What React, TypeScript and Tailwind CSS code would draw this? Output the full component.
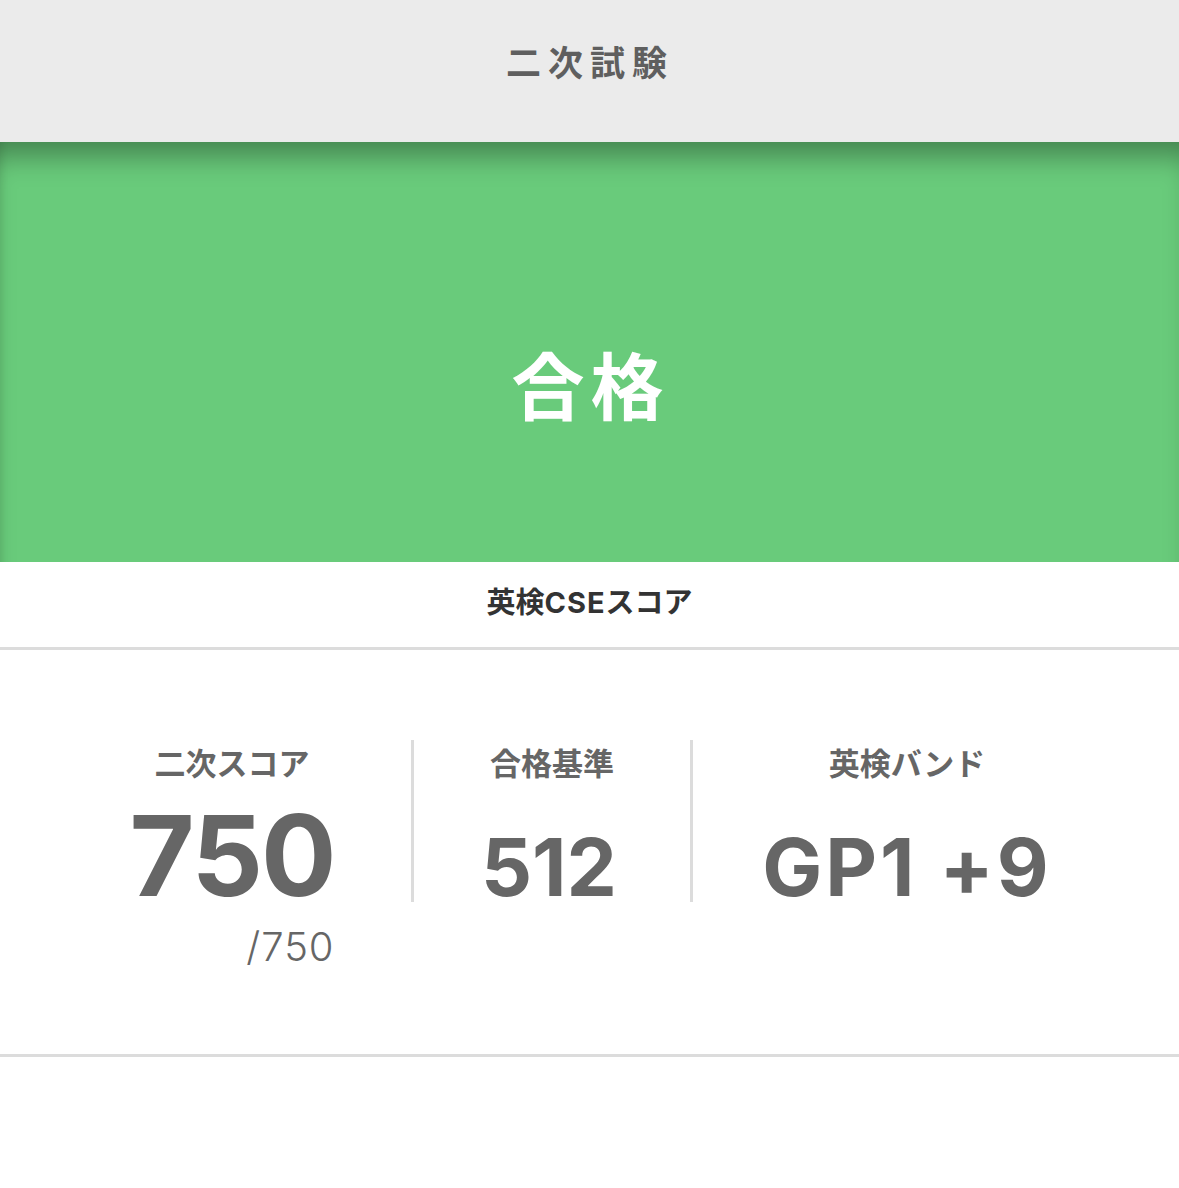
import React from "react";

const jp = { fontFamily: '"Noto Sans CJK JP", "Noto Sans", sans-serif' };
const num = { fontFamily: 'Inter, "Noto Sans CJK JP", sans-serif' };

export default function App() {
  return (
    <div className="w-[1179px] h-[1188px] bg-white overflow-hidden" style={jp}>
      <div className="h-[142px] bg-[#ebebeb] flex items-center justify-center">
        <span className="text-[35px] font-bold text-[#5f5f5f] tracking-[7px] pl-[1px] leading-none mt-[-22px]">二次試験</span>
      </div>
      <div className="h-[420px] bg-[#69cb7b] flex items-center justify-center shadow-[inset_0_28px_28px_-14px_rgba(0,0,0,0.35),inset_10px_0_10px_-10px_rgba(0,0,0,0.12)]">
        <span className="text-[73px] font-bold text-white tracking-[6px] pl-[2px] leading-none mt-[60px]">合格</span>
      </div>
      <div className="h-[88px] flex items-center justify-center border-b-[3px] border-[#dcdcdc]">
        <span className="text-[29px] font-bold text-[#333333] leading-none mt-[-6px]">
          英検<span style={num} className="tracking-[1px]">CSE</span>スコア
        </span>
      </div>
      <div className="h-[407px] border-b-[3px] border-[#dcdcdc] pl-[53px] pt-[90px] grid grid-cols-[358px_3px_276px_3px_428px] items-start">
        <div className="flex flex-col items-center">
          <div className="text-[31px] font-bold text-[#666666] leading-none mt-[6px]">二次スコア</div>
          <div className="flex flex-col items-end">
            <div className="text-[112px] font-bold text-[#666666] leading-none mt-[22px] tracking-[-2px]" style={num}>750</div>
            <div className="text-[40px] font-light text-[#666666] leading-none mt-[16px] tracking-[1px]" style={num}>/750</div>
          </div>
        </div>
        <div className="h-[162px] bg-[#dcdcdc]" />
        <div className="flex flex-col items-center">
          <div className="text-[31px] font-bold text-[#666666] leading-none mt-[6px]">合格基準</div>
          <div className="text-[80px] font-bold text-[#666666] leading-none mt-[50px] pr-[6px]" style={num}>512</div>
        </div>
        <div className="h-[162px] bg-[#dcdcdc]" />
        <div className="flex flex-col items-center">
          <div className="text-[31px] font-bold text-[#666666] leading-none mt-[6px]">英検バンド</div>
          <div className="text-[80px] font-bold text-[#666666] leading-none mt-[50px] tracking-[3px] whitespace-pre" style={num}>GP1 +9</div>
        </div>
      </div>
    </div>
  );
}
